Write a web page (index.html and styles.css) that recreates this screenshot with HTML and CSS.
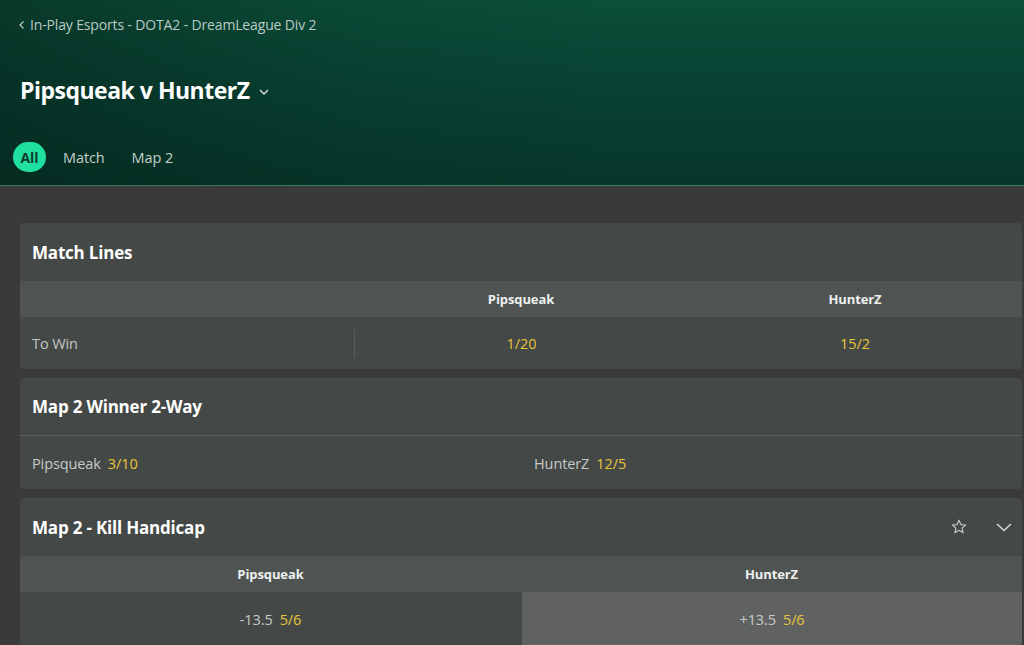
FILE: index.html
```html
<!DOCTYPE html>
<html lang="en">
<head>
<meta charset="utf-8">
<title>Pipsqueak v HunterZ</title>
<link rel="stylesheet" href="styles.css">
</head>
<body>
<header class="hero">
  <nav class="crumb">
    <svg class="crumb-icon" width="8" height="10" viewBox="0 0 8 10"><path d="M5.5 1.5 L2 5 L5.5 8.5" fill="none" stroke="currentColor" stroke-width="1.2"/></svg>
    <span>In-Play Esports - DOTA2 - DreamLeague Div 2</span>
  </nav>
  <h1 class="title">Pipsqueak v HunterZ
    <svg class="title-chev" width="12" height="8" viewBox="0 0 12 8"><path d="M2 2 L6 6 L10 2" fill="none" stroke="currentColor" stroke-width="1.5"/></svg>
  </h1>
  <div class="tabs">
    <span class="tab tab-active">All</span>
    <span class="tab">Match</span>
    <span class="tab">Map 2</span>
  </div>
</header>

<main class="markets">
  <section class="card">
    <div class="card-head"><h2>Match Lines</h2></div>
    <div class="grid3 col-head">
      <div></div>
      <div class="ch">Pipsqueak</div>
      <div class="ch">HunterZ</div>
    </div>
    <div class="grid3 row">
      <div class="label">To Win</div>
      <div class="odds-cell divided"><span class="odds">1/20</span></div>
      <div class="odds-cell"><span class="odds">15/2</span></div>
    </div>
  </section>

  <section class="card">
    <div class="card-head bordered"><h2>Map 2 Winner 2-Way</h2></div>
    <div class="grid2 row row2">
      <div class="pick"><span class="name">Pipsqueak</span><span class="odds">3/10</span></div>
      <div class="pick"><span class="name">HunterZ</span><span class="odds">12/5</span></div>
    </div>
  </section>

  <section class="card">
    <div class="card-head icons-head"><h2>Map 2 - Kill Handicap</h2>
      <div class="head-icons">
        <svg width="18" height="18" viewBox="0 0 18 18"><path d="M9 2.2 L10.9 6.6 L15.6 7 L12 10.1 L13.1 14.8 L9 12.3 L4.9 14.8 L6 10.1 L2.4 7 L7.1 6.6 Z" fill="none" stroke="#c2c6c4" stroke-width="1.2" stroke-linejoin="round"/></svg>
        <svg width="18" height="18" viewBox="0 0 18 18"><path d="M2 6 L9 12.5 L16 6" fill="none" stroke="#d6d9d8" stroke-width="1.5"/></svg>
      </div>
    </div>
    <div class="grid2 col-head">
      <div class="ch">Pipsqueak</div>
      <div class="ch">HunterZ</div>
    </div>
    <div class="grid2 row row3">
      <div class="hc"><span class="name">-13.5</span><span class="odds">5/6</span></div>
      <div class="hc hc-hover"><span class="name">+13.5</span><span class="odds">5/6</span></div>
    </div>
  </section>
</main>
</body>
</html>
```

FILE: styles.css
```css
* { box-sizing: border-box; margin: 0; padding: 0; }
html, body { height: 100%; }
body {
  font-family: "Open Sans", "Noto Sans", sans-serif;
  background: #3a3a3a;
  color: #fff;
  overflow: hidden;
}
.hero {
  height: 186px;
  background:
    linear-gradient(90deg, rgba(5,30,24,0.45) 0%, rgba(5,30,24,0.1) 35%, rgba(0,0,0,0) 60%),
    linear-gradient(180deg, #0b4f3a 0%, #084031 55%, #073629 100%);
  border-bottom: 1px solid #3b7a60;
  padding: 14px 20px 0 13px;
}
.crumb {
  display: flex;
  align-items: center;
  gap: 4px;
  color: #b9cbc3;
  font-size: 14px;
  letter-spacing: -0.15px;
  padding-left: 5px;
  height: 20px;
}
.crumb-icon { margin-top: 1px; }
.title {
  margin-top: 40px;
  padding-left: 7px;
  font-size: 23px;
  font-weight: 700;
  letter-spacing: -0.5px;
  display: flex;
  align-items: center;
  gap: 8px;
  height: 32px;
}
.title-chev { color: #d0d8d4; margin-top: 3px; }
.tabs {
  margin-top: 36px;
  display: flex;
  align-items: center;
  gap: 17px;
}
.tab {
  font-size: 14.5px;
  color: #c3cfca;
  letter-spacing: -0.1px;
}
.tab-active {
  background: #1fe0a0;
  color: #0d3a2c;
  font-weight: 700;
  width: 33px;
  height: 30px;
  border-radius: 15px;
  display: flex;
  align-items: center;
  justify-content: center;
  font-size: 14px;
}
.tabs .tab:nth-child(3) { margin-left: 10px; }

.markets {
  padding: 37px 2px 0 20px;
  display: flex;
  flex-direction: column;
  gap: 9px;
}
.card {
  background: #444846;
  border-radius: 4px;
  overflow: hidden;
}
.card-head {
  height: 58px;
  display: flex;
  align-items: center;
  justify-content: space-between;
  padding: 0 12px;
}
.card-head.icons-head { padding-right: 9px; }
.card-head.bordered { border-bottom: 1px solid #5c605e; }
.card-head h2 {
  font-size: 17px;
  font-weight: 700;
  letter-spacing: -0.2px;
}
.head-icons {
  display: flex;
  gap: 27px;
  align-items: center;
}
.grid3 { display: grid; grid-template-columns: 1fr 1fr 1fr; }
.grid2 { display: grid; grid-template-columns: 1fr 1fr; }
.col-head {
  background: #4f5452;
  height: 36px;
  align-items: center;
}
.ch {
  text-align: center;
  font-size: 13px;
  font-weight: 700;
  color: #eef0ef;
  letter-spacing: -0.1px;
}
.row {
  height: 52px;
  align-items: center;
  font-size: 14.5px;
}
.label {
  padding-left: 12px;
  color: #c3c7c5;
  letter-spacing: -0.1px;
}
.odds-cell {
  height: 100%;
  display: flex;
  align-items: center;
  justify-content: center;
}
.odds-cell.divided { border-left: 1px solid #5a5e5c; height: 29px; }
.odds {
  color: #e8c53a;
  letter-spacing: -0.1px;
}
.row2 { height: 53px; padding-top: 2px; }
.pick {
  padding-left: 12px;
  display: flex;
  gap: 7px;
}
.pick + .pick { padding-left: 13px; }
.name { color: #c6cac8; letter-spacing: -0.1px; }
.row3 { height: 54px; align-items: stretch; }
.hc {
  display: flex;
  align-items: center;
  justify-content: center;
  gap: 7px;
}
.hc-hover { background: #5f6261; margin-left: 1px; }
```
